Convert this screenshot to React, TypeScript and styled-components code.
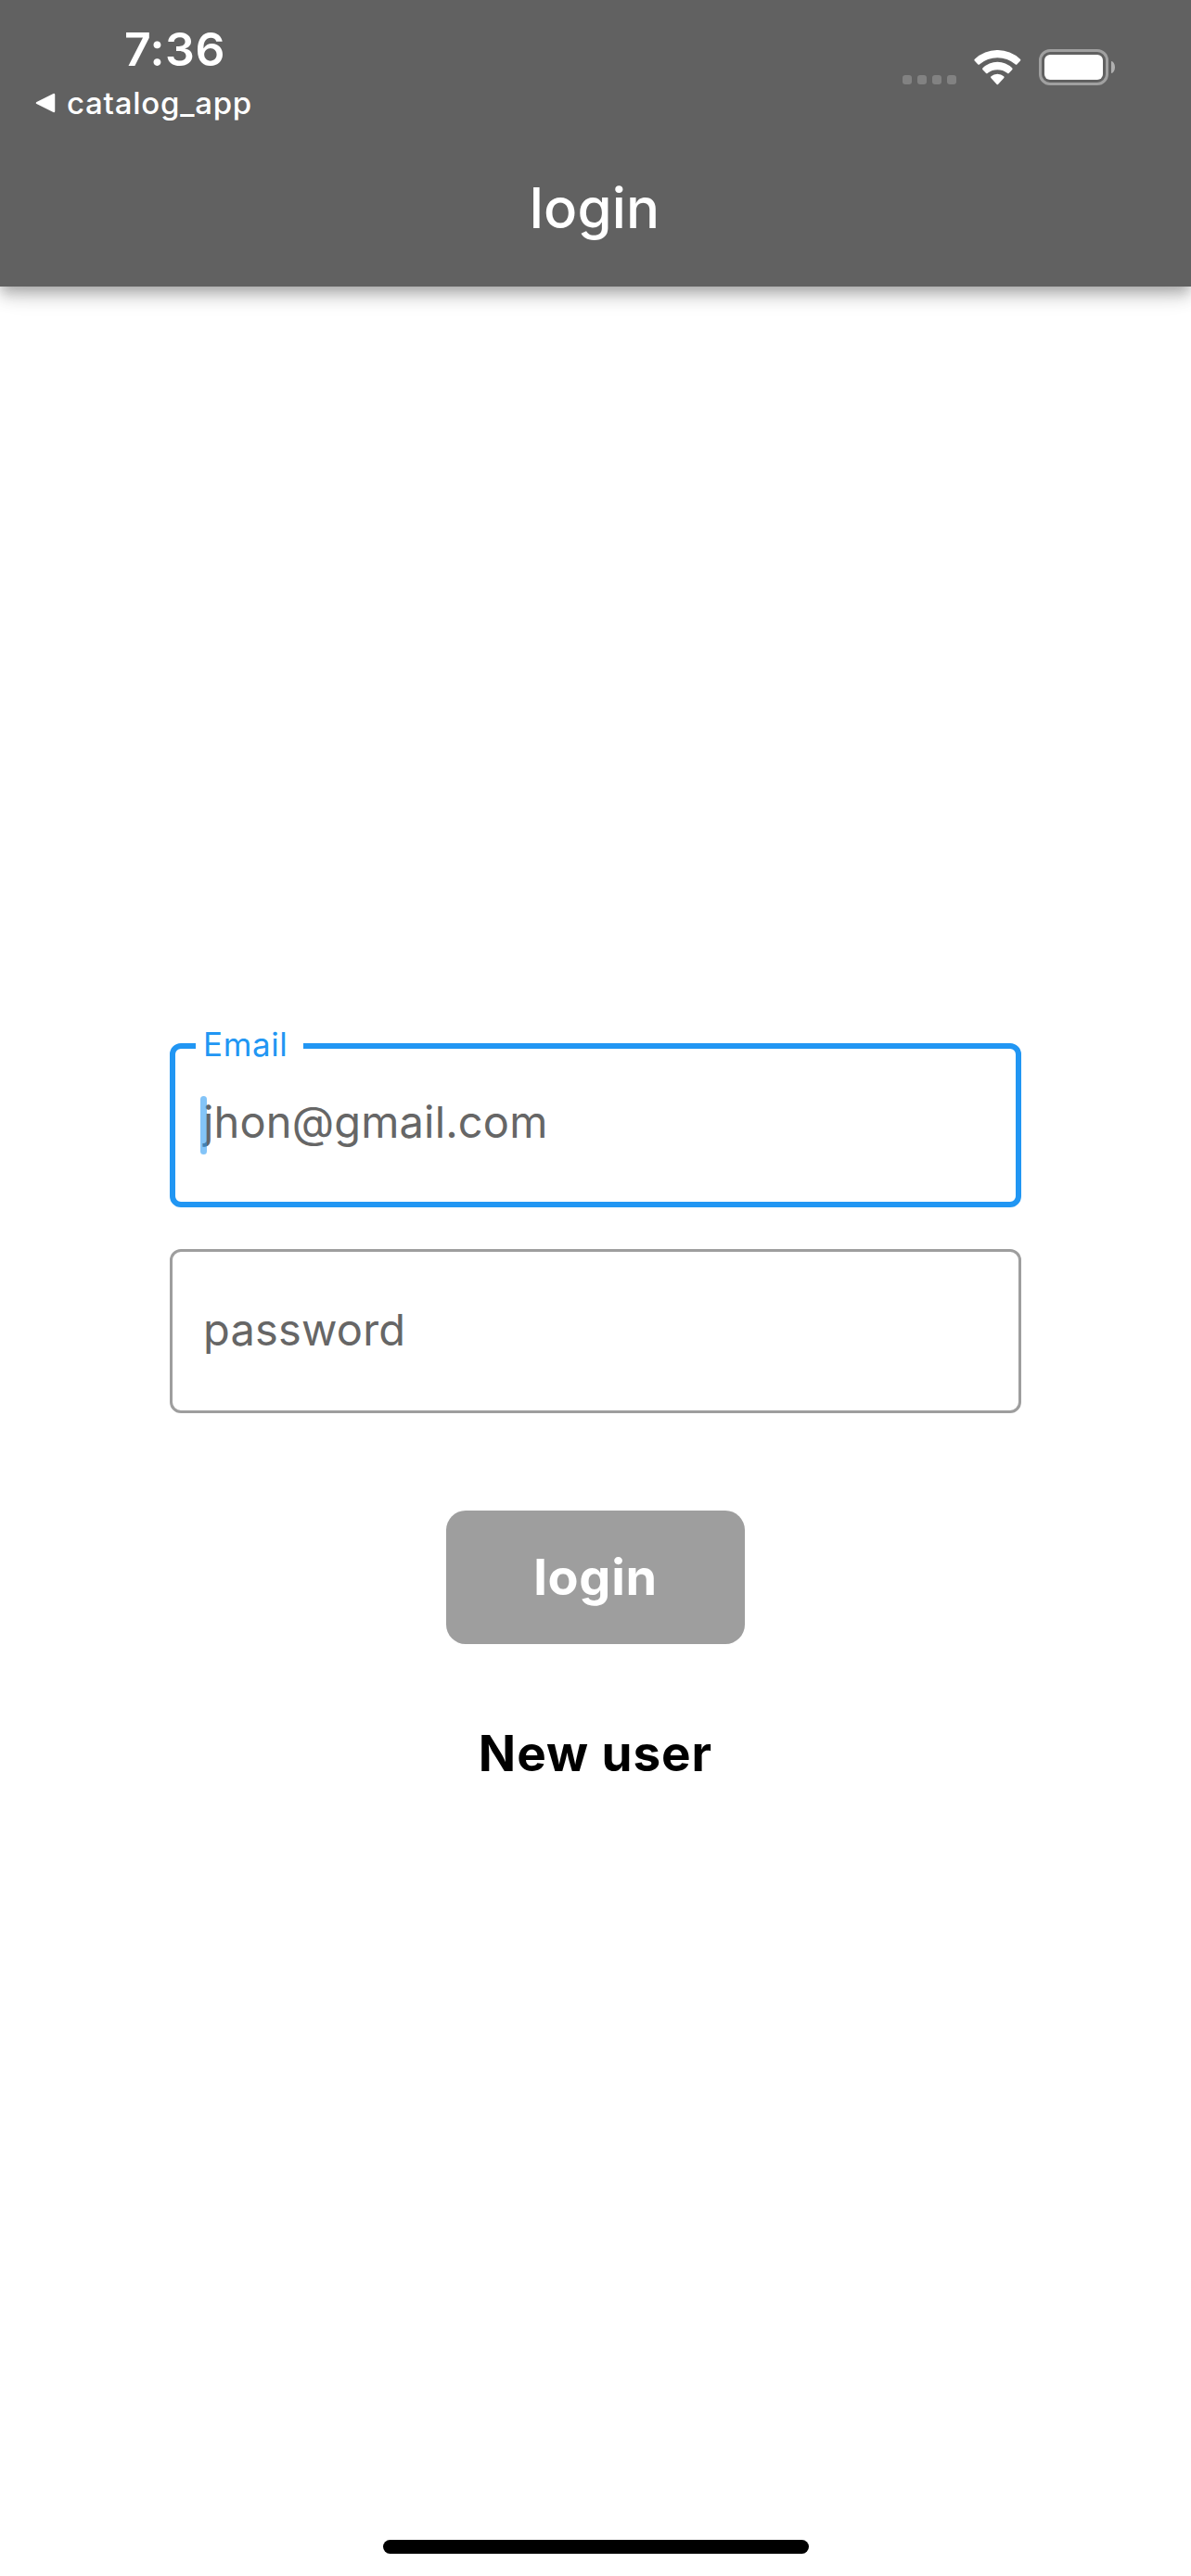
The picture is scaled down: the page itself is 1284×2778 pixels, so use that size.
import React from "react";
import styled, { createGlobalStyle } from "styled-components";

const GlobalStyle = createGlobalStyle`
  * { box-sizing: border-box; }
  body {
    margin: 0;
    background: #fff;
    font-family: Inter, "Liberation Sans", sans-serif;
    -webkit-font-smoothing: antialiased;
  }
`;

const Screen = styled.div`
  display: flex;
  flex-direction: column;
  width: 1284px;
  height: 2778px;
  overflow: hidden;
`;

const AppBar = styled.header`
  display: flex;
  flex-direction: column;
  flex: none;
  height: 309px;
  background: #616161;
  color: #fff;
  box-shadow: 0 6px 12px -3px rgba(0, 0, 0, 0.2), 0 12px 15px rgba(0, 0, 0, 0.14),
    0 3px 30px rgba(0, 0, 0, 0.12);
`;

const StatusBar = styled.div`
  display: flex;
  justify-content: space-between;
  height: 141px;
  padding: 23px 82px 0 38px;
`;

const StatusLeft = styled.div`
  display: flex;
  flex-direction: column;
`;

const Clock = styled.time`
  height: 60px;
  padding-left: 96px;
  font-size: 50px;
  font-weight: 600;
  line-height: 60px;
  letter-spacing: 0.5px;
`;

const BackLink = styled.a`
  display: flex;
  align-items: center;
  gap: 12px;
  height: 40px;
  margin-top: 8px;
  font-size: 33px;
  font-weight: 500;
  line-height: 40px;
  letter-spacing: 0.75px;
`;

const StatusIcons = styled.div`
  display: flex;
  align-items: flex-end;
  height: 69px;
`;

const Signal = styled.div`
  display: flex;
  gap: 6px;
  margin: 0 19px 1px 0;
`;

const SignalDot = styled.i`
  width: 10px;
  height: 10px;
  border-radius: 3px;
  background: #828282;
`;

const Wifi = styled.svg`
  display: block;
  width: 51px;
  height: 38px;
  margin: 0 19px 0.5px 0;
`;

const Battery = styled.div`
  width: 75px;
  height: 39px;
  padding: 3px;
  border: 3px solid #a0a0a0;
  border-radius: 12px;
`;

const BatteryLevel = styled.div`
  height: 27px;
  border-radius: 6px;
  background: #fff;
`;

const BatteryTip = styled.div`
  width: 4px;
  height: 13px;
  margin: 0 0 13px 3px;
  border-radius: 0 4px 4px 0 / 0 6.5px 6.5px 0;
  background: #b0b0b0;
`;

const Title = styled.h1`
  margin: 0;
  padding: 43px 2px 0 0;
  font-size: 60px;
  font-weight: 500;
  line-height: 80px;
  letter-spacing: 0.2px;
  text-align: center;
`;

const Form = styled.form`
  display: flex;
  flex: 1;
  flex-direction: column;
  align-items: center;
  padding-top: 816px;
`;

const Field = styled.label<{ $focused?: boolean }>`
  position: relative;
  display: flex;
  align-items: center;
  width: 918px;
  height: 177px;
  margin-bottom: 45px;
  padding: 0 0 ${(p) => (p.$focused ? 8 : 3)}px ${(p) => (p.$focused ? 30 : 33)}px;
  border: ${(p) => (p.$focused ? "6px solid #2196f3" : "3px solid #9e9e9e")};
  border-radius: 12px;
`;

const FloatingLabel = styled.span`
  position: absolute;
  top: -25px;
  left: 22px;
  width: 116px;
  padding-left: 8px;
  background: #fff;
  color: #2196f3;
  font-size: 35px;
  line-height: 40px;
  letter-spacing: 0.6px;
`;

const Caret = styled.span`
  position: absolute;
  top: 51px;
  left: 27px;
  width: 7px;
  height: 63px;
  border-radius: 3.5px;
  background: rgba(33, 150, 243, 0.56);
`;

const Hint = styled.span<{ $spacing: number }>`
  position: relative;
  color: #666;
  font-size: 47px;
  line-height: 60px;
  letter-spacing: ${(p) => p.$spacing}px;
`;

const LoginButton = styled.button`
  width: 322px;
  height: 144px;
  margin: 60px 0 64px;
  padding: 0;
  border: 0;
  border-radius: 21px;
  background: #9e9e9e;
  color: #fff;
  font: 700 54px/60px Inter, "Liberation Sans", sans-serif;
  letter-spacing: 0.7px;
`;

const NewUser = styled.a`
  color: #000;
  font-size: 53px;
  font-weight: 700;
  line-height: 108px;
  letter-spacing: 0.95px;
`;

const HomeIndicator = styled.div`
  flex: none;
  width: 459px;
  height: 15px;
  margin: 0 0 24px 413px;
  border-radius: 8px;
  background: #000;
`;

export default function App() {
  return (
    <Screen>
      <GlobalStyle />
      <AppBar>
        <StatusBar>
          <StatusLeft>
            <Clock>7:36</Clock>
            <BackLink>
              <svg width="22" height="22" viewBox="0 0 22 22">
                <path
                  d="M2 11 L20 2 V20 Z"
                  fill="#fff"
                  stroke="#fff"
                  strokeWidth="2.5"
                  strokeLinejoin="round"
                />
              </svg>
              catalog_app
            </BackLink>
          </StatusLeft>
          <StatusIcons>
            <Signal>
              <SignalDot />
              <SignalDot />
              <SignalDot />
              <SignalDot />
            </Signal>
            <Wifi viewBox="0 0 152 114" fill="#fff">
              <path d="M2 29 A107.6 107.6 0 0 1 149 29 Q152 32 149 35 L139 46 Q136 49 133 46 A88 88 0 0 0 18 46 Q15 49 12 46 L2 35 Q-1 32 2 29 Z" />
              <path d="M28 58 A67 67 0 0 1 123 58 Q126 61 123 64 L113 74 Q110 77 107 74 A53 53 0 0 0 44 74 Q41 77 38 74 L28 64 Q25 61 28 58 Z" />
              <path d="M55 85 A30 30 0 0 1 96 85 Q99 88 96 91 L77.5 111 Q75.5 113 73.5 111 L55 91 Q52 88 55 85 Z" />
            </Wifi>
            <Battery>
              <BatteryLevel />
            </Battery>
            <BatteryTip />
          </StatusIcons>
        </StatusBar>
        <Title>login</Title>
      </AppBar>
      <Form>
        <Field $focused>
          <FloatingLabel>Email</FloatingLabel>
          <Hint $spacing={0.15}>jhon@gmail.com</Hint>
          <Caret />
        </Field>
        <Field>
          <Hint $spacing={0.2}>password</Hint>
        </Field>
        <LoginButton type="button">login</LoginButton>
        <NewUser>New user</NewUser>
      </Form>
      <HomeIndicator />
    </Screen>
  );
}
